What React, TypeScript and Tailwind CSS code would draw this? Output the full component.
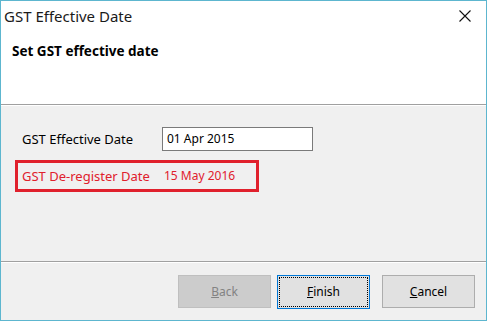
export default function App() {
  const font = { fontFamily: '"Noto Sans", "Open Sans", sans-serif' };
  return (
    <div
      className="w-[487px] h-[321px] border border-[#5db6cf] bg-[#f0f0f0] flex flex-col text-black"
      style={font}
    >
      {/* title + header (white) */}
      <div className="h-[103px] bg-white flex flex-col">
        <div className="h-[31px] flex items-center justify-between pl-[3px] pr-[15px]">
          <span className="text-[15px] leading-none text-[#1a1a1a]">GST Effective Date</span>
          <svg width="12" height="12" viewBox="0 0 12 12" className="mt-[-1px]">
            <path d="M0.5 0.5 L11.5 11.5 M11.5 0.5 L0.5 11.5" stroke="#111" strokeWidth="1.1" />
          </svg>
        </div>
        <div className="pl-[11px] pt-[13px] text-[13.5px] font-bold leading-none">Set GST effective date</div>
      </div>
      <div className="h-px bg-[#a0a0a0]" />
      <div className="h-px bg-white" />

      {/* body */}
      <div className="h-[155px] flex flex-col pt-[21px]">
        <div className="flex items-center h-[24px]">
          <span className="w-[161px] pl-[21px] text-[13px] leading-none">GST Effective Date</span>
          <div className="w-[151px] h-[24px] border border-[#7a7a7a] bg-white flex items-center pl-[4px] text-[12px] leading-none">
            01 Apr 2015
          </div>
        </div>
        <div className="ml-[14px] mt-[9px] w-[244px] h-[32px] border-[3px] border-[#e0202c] flex items-center text-[#e0202c] leading-none">
          <span className="w-[146px] pl-[4px] text-[13px]">GST De-register Date</span>
          <span className="text-[12px]">15 May 2016</span>
        </div>
      </div>
      <div className="h-px bg-[#a0a0a0]" />
      <div className="h-px bg-white" />

      {/* footer */}
      <div className="flex-1 flex justify-end items-start pt-[12px] pr-[11px] text-[12px]">
        <button className="w-[93px] h-[33px] bg-[#cccccc] border border-[#bfbfbf] text-[#838383] leading-none" disabled>
          <span className="underline">B</span>ack
        </button>
        <button className="ml-[6px] w-[93px] h-[34px] bg-[#e1e1e1] border border-[#0078d7] p-[1px] leading-none">
          <div className="w-full h-full border border-dotted border-black flex items-center justify-center">
            <span><span className="underline">F</span>inish</span>
          </div>
        </button>
        <button className="ml-[12px] w-[93px] h-[33px] bg-[#e1e1e1] border border-[#adadad] leading-none">
          <span className="underline">C</span>ancel
        </button>
      </div>
    </div>
  );
}
